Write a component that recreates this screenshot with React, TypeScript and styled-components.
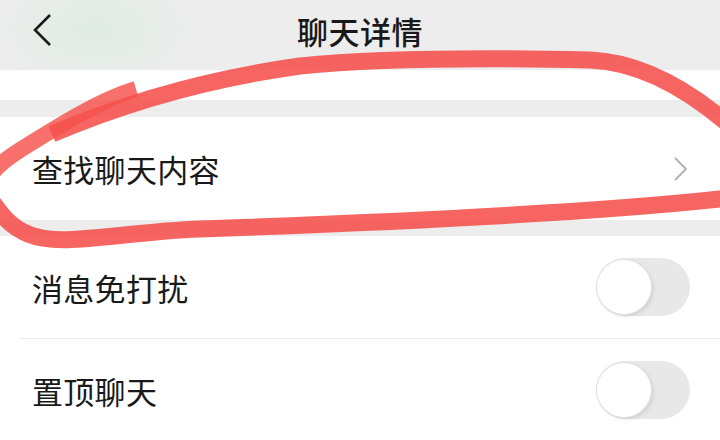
import React from 'react';
import styled, { createGlobalStyle } from 'styled-components';

const GlobalStyle = createGlobalStyle`
  html, body {
    margin: 0;
    padding: 0;
    background: #ededed;
  }
  body {
    font-family: "Noto Sans CJK SC", "Noto Sans", sans-serif;
  }
`;

const Page = styled.div`
  position: relative;
  width: 720px;
  height: 440px;
  overflow: hidden;
  background: #ededed;
  display: flex;
  flex-direction: column;
`;

const Header = styled.header`
  height: 70px;
  flex-shrink: 0;
  display: flex;
  align-items: center;
  justify-content: center;
  position: relative;
  background: radial-gradient(ellipse 110px 60px at 95px 30px, rgba(222, 236, 226, 0.9), rgba(237, 237, 237, 0)),
    #ededed;
`;

const BackButton = styled.button`
  position: absolute;
  left: 24px;
  top: 10px;
  width: 36px;
  height: 40px;
  padding: 0;
  border: 0;
  background: none;
  display: flex;
  align-items: center;
  justify-content: center;
`;

const Title = styled.h1`
  margin: 0;
  margin-top: -10px;
  font-size: 31px;
  font-weight: 500;
  color: #191919;
  letter-spacing: 0.5px;
`;

const Section = styled.section<{ $gap?: number }>`
  background: #fff;
  margin-top: ${(p) => p.$gap ?? 0}px;
  flex-shrink: 0;
`;

const Remnant = styled.div`
  height: 30px;
`;

const Row = styled.div<{ $height: number }>`
  height: ${(p) => p.$height}px;
  display: flex;
  align-items: center;
  justify-content: space-between;
  padding: 0 30px 0 32px;
`;

const Label = styled.span`
  font-size: 31px;
  color: #191919;
  letter-spacing: 0.3px;
`;

const Divider = styled.div`
  height: 1px;
  margin-left: 20px;
  background: #ebebeb;
`;

const Toggle = styled.div`
  width: 94px;
  height: 58px;
  border-radius: 29px;
  background: #e8e8e8;
  display: flex;
  align-items: center;
  margin-right: 0;
`;

const Knob = styled.div`
  width: 54px;
  height: 54px;
  margin-left: 1px;
  border-radius: 50%;
  background: #fff;
  box-shadow: 0 0 0 1px #e2e2e2, 2px 2px 4px rgba(0, 0, 0, 0.12);
`;

const Marker = styled.svg`
  position: absolute;
  left: 0;
  top: 0;
  pointer-events: none;
`;

function Chevron({ color, left }: { color: string; left?: boolean }) {
  return left ? (
    <svg width="24" height="36" viewBox="0 0 24 36">
      <path d="M20 3 L5 18 L20 33" fill="none" stroke={color} strokeWidth="2.6" />
    </svg>
  ) : (
    <svg width="18" height="26" viewBox="0 0 18 26">
      <path d="M3 2 L14 13 L3 24" fill="none" stroke={color} strokeWidth="2" />
    </svg>
  );
}

function Switch() {
  return (
    <Toggle>
      <Knob />
    </Toggle>
  );
}

export default function App() {
  return (
    <>
      <GlobalStyle />
      <Page>
        <Header>
          <BackButton aria-label="back">
            <Chevron color="#1a1a1a" left />
          </BackButton>
          <Title>聊天详情</Title>
        </Header>
        <Section>
          <Remnant />
        </Section>
        <Section $gap={17}>
          <Row $height={103}>
            <Label>查找聊天内容</Label>
            <Chevron color="#b3b3b3" />
          </Row>
        </Section>
        <Section $gap={16}>
          <Row $height={102}>
            <Label>消息免打扰</Label>
            <Switch />
          </Row>
          <Divider />
          <Row $height={102}>
            <Label>置顶聊天</Label>
            <Switch />
          </Row>
        </Section>
        <Marker width="720" height="440" viewBox="0 0 720 440">
          <path
            d="M52 134 C120 105 200 80 300 66 C380 58 500 58 590 60 C640 62 690 90 735 130 L760 170 C755 195 740 197 720 199 C600 212 400 222 200 229 C120 232 60 248 28 234 C8 226 0 212 -12 196"
            fill="none"
            stroke="#f5504c"
            strokeOpacity="0.88"
            strokeWidth="17"
            strokeLinecap="butt"
          />
          <path
            d="M-12 196 C-18 180 -5 166 20 150 C60 125 100 100 136 89"
            fill="none"
            stroke="#f5504c"
            strokeOpacity="0.82"
            strokeWidth="16"
            strokeLinecap="butt"
          />
        </Marker>
      </Page>
    </>
  );
}
